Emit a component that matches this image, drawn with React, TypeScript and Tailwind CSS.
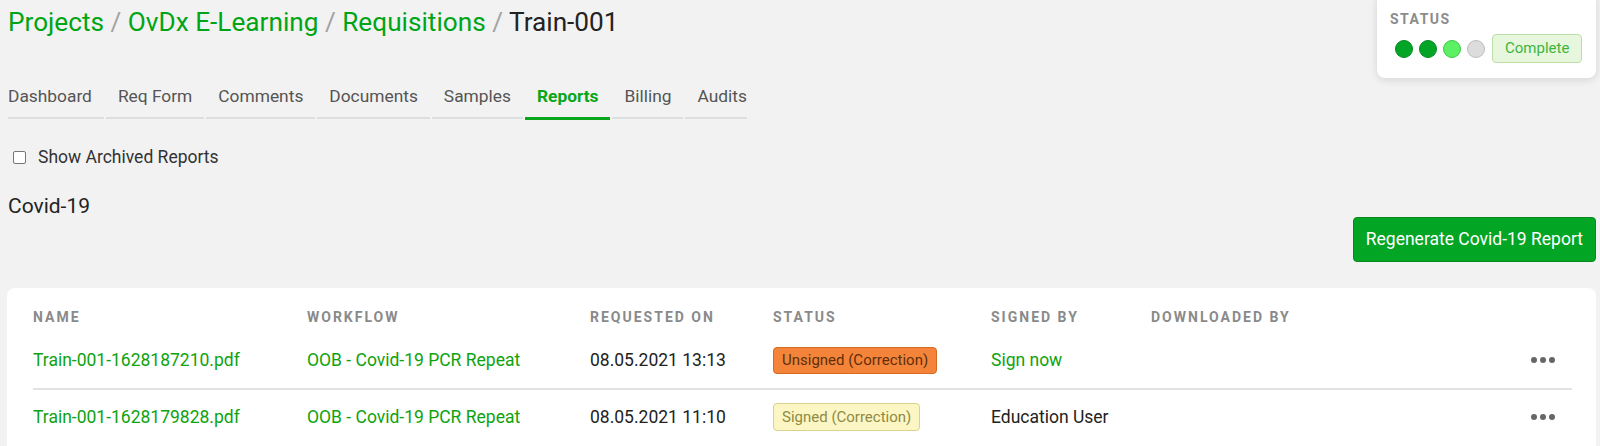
import React from "react";

const tabs = ["Dashboard", "Req Form", "Comments", "Documents", "Samples", "Reports", "Billing", "Audits"];

const rows = [
  {
    name: "Train-001-1628187210.pdf",
    workflow: "OOB - Covid-19 PCR Repeat",
    requested: "08.05.2021 13:13",
    status: "unsigned",
    signedBy: null as string | null,
  },
  {
    name: "Train-001-1628179828.pdf",
    workflow: "OOB - Covid-19 PCR Repeat",
    requested: "08.05.2021 11:10",
    status: "signed",
    signedBy: "Education User",
  },
];

const StatusCard = () => (
  <div className="absolute top-[-8px] right-1 w-[219px] rounded-lg bg-white pt-[19px] pb-[15px] pl-[13px] pr-[12px] shadow-[0_2px_8px_rgba(0,0,0,0.12)]">
    <div className="text-[14px] leading-4 font-bold tracking-[1.5px] text-[#8c8c8c]">STATUS</div>
    <div className="mt-[7px] flex items-center">
      <div className="flex items-center gap-[6px] pl-[5px]">
        <span className="h-[18px] w-[18px] rounded-full border border-[#078a1f] bg-[#03a526]" />
        <span className="h-[18px] w-[18px] rounded-full border border-[#078a1f] bg-[#03a526]" />
        <span className="h-[18px] w-[18px] rounded-full border border-[#3fc84a] bg-[#5cf064]" />
        <span className="h-[18px] w-[18px] rounded-full border border-[#bdbdbd] bg-[#dcdcdc]" />
      </div>
      <span className="ml-[7px] flex h-[29px] items-center rounded border border-[#bcdfa8] bg-[#e7f7dd] px-3 text-[15px] text-[#3db53d]">
        Complete
      </span>
    </div>
  </div>
);

const Badge = ({ status }: { status: string }) =>
  status === "unsigned" ? (
    <span className="inline-flex h-[27px] items-center rounded border border-[#d8691f] bg-[#f5843b] px-2 text-[15px] text-[#5e2f07]">
      Unsigned (Correction)
    </span>
  ) : (
    <span className="inline-flex h-[28px] items-center rounded border border-[#d9d28e] bg-[#fcf6c4] px-2 text-[15px] text-[#8f8a45]">
      Signed (Correction)
    </span>
  );

const Dots = () => (
  <div className="flex items-center gap-[3px]">
    <span className="h-[6px] w-[6px] rounded-full bg-[#666]" />
    <span className="h-[6px] w-[6px] rounded-full bg-[#666]" />
    <span className="h-[6px] w-[6px] rounded-full bg-[#666]" />
  </div>
);

const cols = "grid grid-cols-[274px_283px_183px_218px_160px_1fr_60px]";

export default function App() {
  return (
    <div className="relative min-h-[446px] overflow-hidden bg-[#f2f2f2] pl-2 pr-1 font-['Roboto',sans-serif]">
      <StatusCard />

      <div className="pt-[6px] text-[26.2px] leading-8">
        <a className="text-[#00a516]">Projects</a>
        <span className="text-[#a3a3a3]"> / </span>
        <a className="text-[#00a516]">OvDx E-Learning</a>
        <span className="text-[#a3a3a3]"> / </span>
        <a className="text-[#00a516]">Requisitions</a>
        <span className="text-[#a3a3a3]"> / </span>
        <span className="text-[#222]">Train-001</span>
      </div>

      <div className="mt-[46px] flex items-start gap-[2px]">
        {tabs.map((t) => {
          const active = t === "Reports";
          return (
            <div
              key={t}
              className={`px-3 pb-[9px] text-[17.35px] leading-6 first:pl-0 last:pr-0 ${
                active
                  ? "border-b-[3px] border-[#0aa61a] font-bold text-[#0aa61a]"
                  : "border-b-2 border-[#dedede] text-[#555]"
              }`}
            >
              {t}
            </div>
          );
        })}
      </div>

      <label className="mt-[25px] flex items-center gap-[12px] pl-[5px] text-[17.5px] leading-6 text-[#333]">
        <span className="h-[13px] w-[13px] rounded-[2px] border border-[#777] bg-white" />
        Show Archived Reports
      </label>

      <h2 className="mt-[23px] text-[21px] leading-7 text-[#222]">Covid-19</h2>

      <div className="-mt-[3px] flex justify-end">
        <button className="h-[45px] rounded border border-[#07891e] bg-[#02a524] px-3 text-[17.5px] text-white">
          Regenerate Covid-19 Report
        </button>
      </div>

      <div className="-ml-px mt-[26px] rounded-lg bg-white pt-[19px] pl-[26px] pr-6 pb-4">
        <div className={`${cols} pb-[5px] text-[14px] leading-5 font-bold tracking-[2px] text-[#8a8a8a]`}>
          <div>NAME</div>
          <div>WORKFLOW</div>
          <div>REQUESTED ON</div>
          <div>STATUS</div>
          <div>SIGNED BY</div>
          <div>DOWNLOADED BY</div>
          <div />
        </div>
        {rows.map((r, i) => (
          <div
            key={r.name}
            className={`${cols} h-[56px] items-center text-[17.5px] ${i > 0 ? "border-t-2 border-[#e2e2e2]" : ""}`}
          >
            <a className="text-[#0ea30e]">{r.name}</a>
            <a className="text-[#0ea30e]">{r.workflow}</a>
            <div className="text-[#222]">{r.requested}</div>
            <div>
              <Badge status={r.status} />
            </div>
            <div>
              {r.signedBy ? (
                <span className="text-[#222]">{r.signedBy}</span>
              ) : (
                <a className="text-[#0ea30e]">Sign now</a>
              )}
            </div>
            <div />
            <div className="flex justify-end pr-[17px]">
              <Dots />
            </div>
          </div>
        ))}
      </div>
    </div>
  );
}
